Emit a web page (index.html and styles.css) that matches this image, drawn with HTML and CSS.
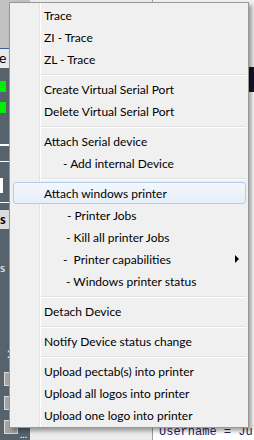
FILE: index.html
```html
<!DOCTYPE html>
<html lang="en">
<head>
    <meta charset="UTF-8">
    <title>Device menu</title>
    <link rel="stylesheet" href="styles.css">
</head>
<body>

    <!-- Application behind the popup -->
    <div class="app">
        <div class="left-pane">
            <div class="pane-head"></div>
            <div class="pane-tab">e</div>
            <div class="pane-body">
                <div class="led"></div>
                <div class="led second"></div>
                <div class="rule thick"></div>
                <div class="rule thin"></div>
                <div class="field"></div>
                <div class="rule low"></div>
                <div class="pane-button">s</div>
                <div class="pane-label">s</div>
                <div class="pane-label num">2</div>
                <div class="check first"></div>
                <div class="check"></div>
                <div class="check"></div>
                <div class="dots">...</div>
            </div>
        </div>
        <div class="gutter"></div>
        <div class="editor">
            <div class="editor-top"></div>
            <div class="editor-band"></div>
            <div class="code">
                <div class="code-line">Username = Julien</div>
            </div>
        </div>
    </div>

    <!-- Context menu -->
    <div class="menu">
        <div class="item">Trace</div>
        <div class="item">ZI - Trace</div>
        <div class="item">ZL - Trace</div>
        <div class="sep"></div>
        <div class="item">Create Virtual Serial Port</div>
        <div class="item">Delete Virtual Serial Port</div>
        <div class="sep"></div>
        <div class="item">Attach Serial device</div>
        <div class="item indent-a">- Add internal Device</div>
        <div class="sep"></div>
        <div class="item hot">Attach windows printer</div>
        <div class="item indent-c">- Printer Jobs</div>
        <div class="item indent-b">- Kill all printer Jobs</div>
        <div class="item indent-a">-  Printer capabilities<span class="arrow"></span></div>
        <div class="item indent-b">- Windows printer status</div>
        <div class="sep"></div>
        <div class="item">Detach Device</div>
        <div class="sep"></div>
        <div class="item">Notify Device status change</div>
        <div class="sep"></div>
        <div class="item">Upload pectab(s) into printer</div>
        <div class="item">Upload all logos into printer</div>
        <div class="item">Upload one logo into printer</div>
    </div>

</body>
</html>
```
FILE: styles.css
```css
body {
    margin: 0;
    width: 254px;
    height: 440px;
    overflow: hidden;
    position: relative;
    font-family: Lato, "Noto Sans", sans-serif;
    background-color: #ffffff;
}

/* Background application */
.app {
    display: flex;
    height: 440px;
}

.left-pane {
    width: 30px;
    flex-shrink: 0;
    display: flex;
    flex-direction: column;
}

.pane-head {
    height: 48px;
    background-color: #c2c2c2;
}

.pane-tab {
    height: 19px;
    border-top: 1px solid #3a5fa0;
    background-color: #eaeaea;
    font-size: 14px;
    line-height: 18px;
    color: #000;
    margin-left: -1px;
}

.pane-body {
    flex: 1;
    display: flex;
    flex-direction: column;
    background-color: #56636c;
}

.led {
    width: 6px;
    height: 11px;
    margin-top: 13px;
    background-color: #00f000;
}

.led.second {
    margin-top: 10px;
}

.rule {
    height: 1px;
    background-color: #ffffff;
}

.rule.thick {
    height: 2px;
    margin-top: 31px;
}

.rule.thin {
    margin-top: 15px;
}

.rule.low {
    margin-top: 9px;
}

.field {
    width: 3px;
    height: 15px;
    margin-top: 16px;
    background-color: #ffffff;
}

.pane-button {
    height: 19px;
    margin-top: 6px;
    border-top: 1px solid #3a5fa0;
    background-color: #dcdcdc;
    font-size: 13px;
    font-weight: bold;
    line-height: 19px;
    color: #000;
}

.pane-label {
    margin-top: 32px;
    font-size: 12px;
    line-height: 14px;
    color: #ffffff;
}

.pane-label.num {
    margin-top: 72px;
    padding-left: 7px;
}

.check {
    width: 12px;
    height: 12px;
    margin: 10px 0 0 4px;
    border: 1px solid #d8d8d8;
    background-color: #a4a4a4;
}

.check.first {
    margin-top: 11px;
}

.dots {
    margin: -5px 0 0 20px;
    font-size: 10px;
    line-height: 10px;
    color: #ffffff;
}

.gutter {
    width: 122px;
    flex-shrink: 0;
    background-color: #ececec;
}

.editor {
    flex: 1;
    min-width: 0;
    overflow: hidden;
    display: flex;
    flex-direction: column;
    border-left: 1px solid #a0a0a0;
}

.editor-top {
    height: 67px;
    background-color: #f0f0f0;
}

.editor-band {
    height: 25px;
    background-color: #15152a;
}

.code {
    flex: 1;
    display: flex;
    flex-direction: column;
    justify-content: flex-end;
    padding: 0 0 1px 6px;
}

.code-line {
    font-family: "Liberation Mono", monospace;
    font-size: 12px;
    line-height: 14px;
    color: #1f2366;
    white-space: pre;
}

/* Context menu */
.menu {
    position: absolute;
    left: 9px;
    top: 2px;
    width: 240px;
    box-sizing: border-box;
    border: 1px solid #979797;
    padding: 1px 2px 1px 3px;
    background: linear-gradient(to right, transparent 29px, #e2e3e3 29px, #e2e3e3 30px, #ffffff 30px, #ffffff 31px, transparent 31px), #f0f0f0;
    box-shadow: 3px 3px 4px rgba(0, 0, 0, 0.35);
}

.item {
    height: 22px;
    box-sizing: border-box;
    border: 1px solid transparent;
    border-radius: 3px;
    padding-left: 30px;
    display: flex;
    align-items: center;
    font-size: 12px;
    color: #000000;
    white-space: pre;
}

.item.indent-a {
    padding-left: 49px;
}

.item.indent-b {
    padding-left: 52px;
}

.item.indent-c {
    padding-left: 53px;
}

.item.hot {
    border-color: #aecdf3;
    background: linear-gradient(#f3f7fd, #e6eefa);
}

.arrow {
    margin-left: auto;
    margin-right: 6px;
    width: 0;
    height: 0;
    border-left: 4px solid #000000;
    border-top: 4px solid transparent;
    border-bottom: 4px solid transparent;
}

.sep {
    height: 8px;
    margin-left: 28px;
    background: linear-gradient(to bottom, transparent 4px, #e0e0e0 4px, #e0e0e0 5px, #ffffff 5px, #ffffff 6px, transparent 6px);
}
```
